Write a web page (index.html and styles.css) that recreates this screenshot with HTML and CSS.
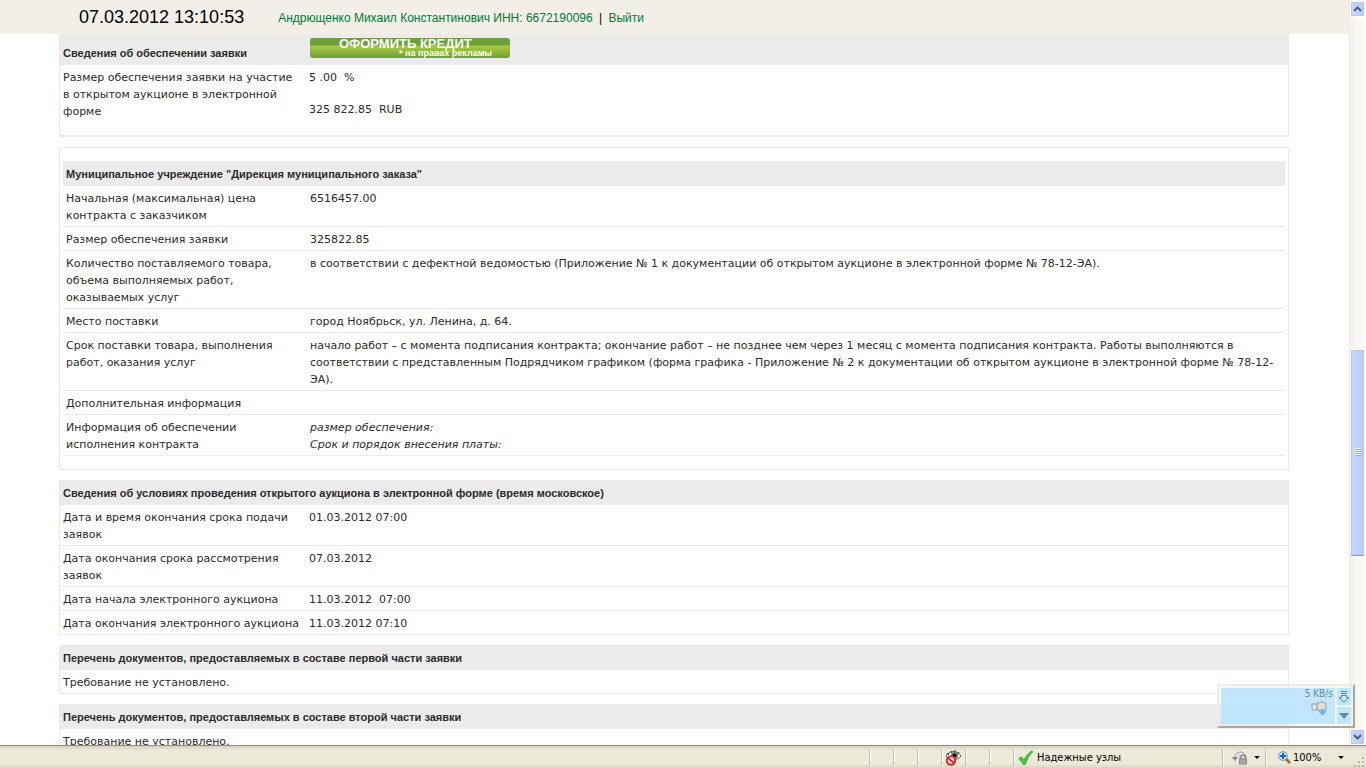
FILE: index.html
```
<!DOCTYPE html>
<html lang="ru">
<head>
    <meta charset="UTF-8">
    <meta name="viewport" content="width=device-width, initial-scale=1.0">
    <title>Сведения об аукционе</title>
    <link rel="stylesheet" href="styles.css">
</head>
<body>

    <div class="window">
        <div class="page">
            <header class="topbar">
                <div class="clock">07.03.2012 13:10:53</div>
                <nav class="user">
                    <a href="#">Андрющенко Михаил Константинович ИНН: 6672190096</a>
                    <span class="divider">|</span>
                    <a href="#">Выйти</a>
                </nav>
            </header>

            <main class="content">
                <section class="block block-deposit">
                    <div class="block-title title-ad">
                        <h2>Сведения об обеспечении заявки</h2>
                        <a class="credit" href="#">
                            <span class="credit-text">ОФОРМИТЬ КРЕДИТ</span>
                            <span class="credit-note">* на правах рекламы</span>
                        </a>
                    </div>
                    <table class="info">
                        <tr>
                            <th scope="row">Размер обеспечения заявки на участие<br>в открытом аукционе в электронной<br>форме</th>
                            <td>
                                <p>5 .00 &nbsp;%</p>
                                <p>325 822.85 &nbsp;RUB</p>
                            </td>
                        </tr>
                    </table>
                </section>

                <section class="block block-customer">
                    <h2 class="block-title">Муниципальное учреждение "Дирекция муниципального заказа"</h2>
                    <table class="info">
                        <tr>
                            <th scope="row">Начальная (максимальная) цена<br>контракта с заказчиком</th>
                            <td>6516457.00</td>
                        </tr>
                        <tr>
                            <th scope="row">Размер обеспечения заявки</th>
                            <td>325822.85</td>
                        </tr>
                        <tr>
                            <th scope="row">Количество поставляемого товара,<br>объема выполняемых работ,<br>оказываемых услуг</th>
                            <td>в соответствии с дефектной ведомостью (Приложение № 1 к документации об открытом аукционе в электронной форме № 78-12-ЭА).</td>
                        </tr>
                        <tr>
                            <th scope="row">Место поставки</th>
                            <td>город Ноябрьск, ул. Ленина, д. 64.</td>
                        </tr>
                        <tr>
                            <th scope="row">Срок поставки товара, выполнения<br>работ, оказания услуг</th>
                            <td>начало работ – с момента подписания контракта; окончание работ – не позднее чем через 1 месяц с момента подписания контракта. Работы выполняются в<br>соответствии с представленным Подрядчиком графиком (форма графика - Приложение № 2 к документации об открытом аукционе в электронной форме № 78-12-<br>ЭА).</td>
                        </tr>
                        <tr>
                            <th scope="row">Дополнительная информация</th>
                            <td></td>
                        </tr>
                        <tr>
                            <th scope="row">Информация об обеспечении<br>исполнения контракта</th>
                            <td><em>размер обеспечения:<br>Срок и порядок внесения платы:</em></td>
                        </tr>
                    </table>
                </section>

                <section class="block">
                    <h2 class="block-title">Сведения об условиях проведения открытого аукциона в электронной форме (время московское)</h2>
                    <table class="info">
                        <tr>
                            <th scope="row">Дата и время окончания срока подачи<br>заявок</th>
                            <td>01.03.2012 07:00</td>
                        </tr>
                        <tr>
                            <th scope="row">Дата окончания срока рассмотрения<br>заявок</th>
                            <td>07.03.2012</td>
                        </tr>
                        <tr>
                            <th scope="row">Дата начала электронного аукциона</th>
                            <td>11.03.2012 &nbsp;07:00</td>
                        </tr>
                        <tr>
                            <th scope="row">Дата окончания электронного аукциона</th>
                            <td>11.03.2012 07:10</td>
                        </tr>
                    </table>
                </section>

                <section class="block">
                    <h2 class="block-title">Перечень документов, предоставляемых в составе первой части заявки</h2>
                    <p class="note">Требование не установлено.</p>
                </section>

                <section class="block">
                    <h2 class="block-title">Перечень документов, предоставляемых в составе второй части заявки</h2>
                    <p class="note">Требование не установлено.</p>
                </section>
            </main>
        </div>

        <div class="scrollbar">
            <button class="scroll-button" type="button" aria-label="Вверх">
                <svg width="9" height="6" viewBox="0 0 9 6"><path d="M1 5l3.500-3.500L8 5" fill="none" stroke="#4d6185" stroke-width="2"/></svg>
            </button>
            <div class="track-before"></div>
            <div class="thumb">
                <svg width="8" height="8" viewBox="0 0 8 8" shape-rendering="crispEdges">
                    <path d="M0 .5h7M0 2.500h7M0 4.500h7M0 6.500h7" stroke="#eef4fe"/>
                    <path d="M1 1.500h7M1 3.500h7M1 5.500h7M1 7.500h7" stroke="#8cb0f8"/>
                </svg>
            </div>
            <div class="track-after"></div>
            <button class="scroll-button" type="button" aria-label="Вниз">
                <svg width="9" height="6" viewBox="0 0 9 6"><path d="M1 1l3.500 3.500L8 1" fill="none" stroke="#4d6185" stroke-width="2"/></svg>
            </button>
        </div>
    </div>

    <footer class="statusbar">
        <div class="pane"></div>
        <div class="pane"></div>
        <div class="pane"></div>
        <div class="pane pane-icon">
            <svg width="18" height="16" viewBox="0 0 18 16">
                <path d="M1 6C5 0 12 0 16 6C12 11 5 11 1 6z" fill="#fff" stroke="#555"/>
                <path d="M2 3l2 2M6 1l1 2M10 0v2M14 2l-1 2" stroke="#333"/>
                <circle cx="9.500" cy="5.500" r="3.500" fill="#777"/>
                <circle cx="9.500" cy="5.500" r="2" fill="#111"/>
                <circle cx="6" cy="10.500" r="4.200" fill="#fbe3e1" stroke="#d22f2b" stroke-width="2"/>
                <path d="M3 8l6 5" stroke="#d22f2b" stroke-width="2"/>
            </svg>
        </div>
        <div class="pane"></div>
        <div class="pane"></div>
        <div class="pane pane-zone">
            <svg width="16" height="16" viewBox="0 0 16 16"><path d="M1 8.500L3.500 7L6 10.500C8 6 10.500 3 14 1L14.500 2C11 5.500 9 9 7 14.500H5.500z" fill="#4fd23c" stroke="#2ca023"/></svg>
            <span>Надежные узлы</span>
        </div>
        <div class="pane pane-lock">
            <svg width="16" height="15" viewBox="0 0 16 15">
                <path d="M3 8A5.500 5.500 0 0 1 14 7v4H8V5" fill="#e4e4e4" stroke="#a0a0a0"/>
                <path d="M0 7h6L3 11z" fill="#888"/>
                <path d="M9 9V7a2 2 0 0 1 4 0v2" fill="none" stroke="#888" stroke-width="1.500"/>
                <path d="M7.500 9h7v5h-7z" fill="#a8a8a8" stroke="#888"/>
            </svg>
            <span class="arrow"></span>
        </div>
        <div class="pane pane-zoom">
            <svg width="13" height="13" viewBox="0 0 13 13">
                <path d="M8 8l4 4" stroke="#a06a35" stroke-width="2.500"/>
                <circle cx="5" cy="5" r="4.300" fill="#d5ecfc" stroke="#5295ce"/>
                <path d="M5 2v6M2 5h6" stroke="#155fc5" stroke-width="2"/>
            </svg>
            <span class="zoom-value">100%</span>
            <span class="arrow"></span>
        </div>
        <svg class="grip" width="12" height="12" viewBox="0 0 12 12"><path d="M9 1h2v2H9zM5 5h2v2H5zM9 5h2v2H9zM1 9h2v2H1zM5 9h2v2H5zM9 9h2v2H9z" fill="#bab6a1"/></svg>
    </footer>

    <!-- download monitor floating over the page -->
    <aside class="monitor">
        <div class="monitor-main">
            <span>5 KB/s</span>
            <svg width="18" height="16" viewBox="0 0 18 16">
                <path d="M1 4h5v6H2a1 1 0 0 1-1-1z" fill="#dce8ee" stroke="#8b9ca8"/>
                <path d="M6 3h2l1-1h3l1 1h2v7H6z" fill="#e4dcd5" stroke="#9c9c9c"/>
                <path d="M10 9h3v2h3l-4.500 4.500L7 11h3z" fill="#60b8ef"/>
            </svg>
        </div>
        <div class="monitor-side">
            <button type="button" aria-label="Загрузки">
                <svg width="12" height="13" viewBox="0 0 12 13">
                    <path d="M3 1.500h6M3 3.500h6" stroke="#3b91c2"/>
                    <path d="M3.500 5.500h5v2h2.500L6 12L1 7.500h2.500z" fill="#d7f0ff" stroke="#3b91c2"/>
                </svg>
            </button>
            <button type="button" aria-label="Меню">
                <svg width="10" height="6" viewBox="0 0 10 6"><path d="M0 0h10L5 6z" fill="#5d8bae"/></svg>
            </button>
        </div>
    </aside>

</body>
</html>
```
FILE: styles.css
```
* {
    box-sizing: border-box;
}

body {
    display: flex;
    flex-direction: column;
    height: 100vh;
    margin: 0;
    overflow: hidden;
    position: relative;
    background: #fff;
    color: #2b2b2b;
    font-family: Verdana, "DejaVu Sans", sans-serif;
    font-size: 11px;
    line-height: 17px;
}

svg {
    display: block;
    flex: none;
}

button {
    padding: 0;
    display: flex;
    align-items: center;
    justify-content: center;
}

h2, p {
    margin: 0;
}

.window {
    flex: 1;
    min-height: 0;
    display: flex;
}

.page {
    flex: 1;
    min-width: 0;
    overflow: hidden;
}

/* top bar */
.topbar {
    display: flex;
    align-items: center;
    gap: 34px;
    height: 34px;
    padding-left: 79px;
    background: #f2efe8;
    font-family: Arial, "Liberation Sans", sans-serif;
    color: #000;
}

.clock {
    font-size: 18px;
    white-space: nowrap;
}

.user {
    padding-top: 2px;
    font-size: 12px;
    white-space: nowrap;
}

.user a {
    color: #007a33;
    text-decoration: none;
}

.divider {
    margin: 0 3px;
}

/* content */
.content {
    display: flex;
    flex-direction: column;
    gap: 10px;
    padding: 0 60px 0 59px;
}

.block {
    border: 1px solid #ebebeb;
    border-top: none;
}

.block-title {
    padding: 5px 3px 3px;
    background: #ebebeb;
    font: bold 11px/17px Arial, "Liberation Sans", sans-serif;
}

.block-deposit {
    border-bottom-width: 2px;
}

.block-customer {
    padding: 13px 3px;
    border-top: 1px solid #ebebeb;
}

.title-ad {
    display: flex;
    align-items: flex-end;
    height: 31px;
    padding-top: 4px;
}

.title-ad h2 {
    width: 247px;
    font: inherit;
}

.credit {
    align-self: flex-start;
    display: flex;
    flex-direction: column;
    width: 200px;
    height: 20px;
    padding: 0 18px 0 29px;
    border-radius: 3px;
    background: linear-gradient(#6d9f3b 0, #6d9f3b 35%, #a9c840 40%, #9dc03f 55%, #6d9f3b 100%);
    color: #fff;
    text-decoration: none;
}

.credit-text {
    font-size: 13px;
    line-height: 11px;
    white-space: nowrap;
}

.credit-note {
    align-self: flex-end;
    font-size: 9px;
    line-height: 9px;
    white-space: nowrap;
}

.info {
    width: 100%;
    table-layout: fixed;
    border-collapse: collapse;
}

.info th, .info td {
    padding: 4px 3px 2px;
    border-bottom: 1px solid #ebebeb;
    font-weight: normal;
    text-align: left;
    vertical-align: top;
}

.info th {
    width: 246px;
    white-space: nowrap;
}

.block-customer .info th {
    width: 244px;
}

.block > .info:last-child tr:last-child > * {
    border-bottom: none;
}

.block-customer > .info:last-child tr:last-child > * {
    border-bottom: 1px solid #ebebeb;
}

.info p {
    margin-bottom: 15px;
}

.note {
    padding: 4px 3px 2px;
}

/* scrollbar */
.scrollbar {
    display: flex;
    flex-direction: column;
    width: 17px;
    padding: 1px 1px 0 0;
    border-left: 1px solid #eeede5;
    background: linear-gradient(90deg, #f3f1ec, #fefefb);
}

.scroll-button, .thumb {
    border: 1px solid #fff;
    border-radius: 2px;
    outline: 1px solid #b3c8f3;
    outline-offset: -2px;
    background: linear-gradient(90deg, #c9d7fc, #b7cdfb);
}

.scroll-button {
    height: 16px;
}

.track-before {
    flex: 332;
}

.thumb {
    flex: 206;
    display: flex;
    align-items: center;
    justify-content: center;
    border-bottom-color: #7ba0dd;
}

.track-after {
    flex: 173;
}

/* status bar */
.statusbar {
    display: flex;
    justify-content: flex-end;
    height: 23px;
    border-top: 1px solid #8f8c80;
    background: linear-gradient(#d4d0bc 0, #ece9d8 20%, #ece9d8 80%, #dad6c0 100%);
    color: #000;
    font-family: Tahoma, "DejaVu Sans Condensed", sans-serif;
}

.pane {
    display: flex;
    align-items: center;
    width: 24px;
    margin: 3px 0 2px;
    border-left: 1px solid #c4c1b0;
    box-shadow: inset 1px 0 #fff;
}

.pane-icon {
    padding-left: 3px;
}

.pane-zone {
    width: 209px;
    gap: 3px;
    padding-left: 4px;
}

.pane-lock {
    width: 43px;
    gap: 6px;
    padding-left: 9px;
}

.pane-zoom {
    width: 88px;
    gap: 2px;
    padding-left: 12px;
}

.zoom-value {
    width: 43px;
}

.arrow {
    border: 3px solid transparent;
    border-top-color: #000;
    border-bottom: none;
}

.grip {
    align-self: flex-end;
    margin-right: 1px;
}

/* download monitor */
.monitor {
    position: absolute;
    right: 11px;
    bottom: 40px;
    display: flex;
    gap: 2px;
    width: 138px;
    height: 44px;
    padding: 2px;
    border: 2px solid #aaa69a;
    border-top-color: #eeebe4;
    border-left-color: #eeebe4;
    background: rgba(240, 237, 228, 0.5);
    color: #6b8797;
    font-family: Tahoma, "DejaVu Sans Condensed", sans-serif;
    font-size: 10px;
    line-height: 12px;
}

.monitor-main {
    flex: 1;
    display: flex;
    flex-direction: column;
    align-items: flex-end;
    padding-right: 2px;
    background: rgba(176, 225, 255, 0.75);
}

.monitor-main svg {
    margin-right: 4px;
}

.monitor-side {
    display: flex;
    flex-direction: column;
    gap: 2px;
    width: 14px;
}

.monitor-side button {
    flex: 1;
    border: none;
    background: #bee6ff;
}
```
